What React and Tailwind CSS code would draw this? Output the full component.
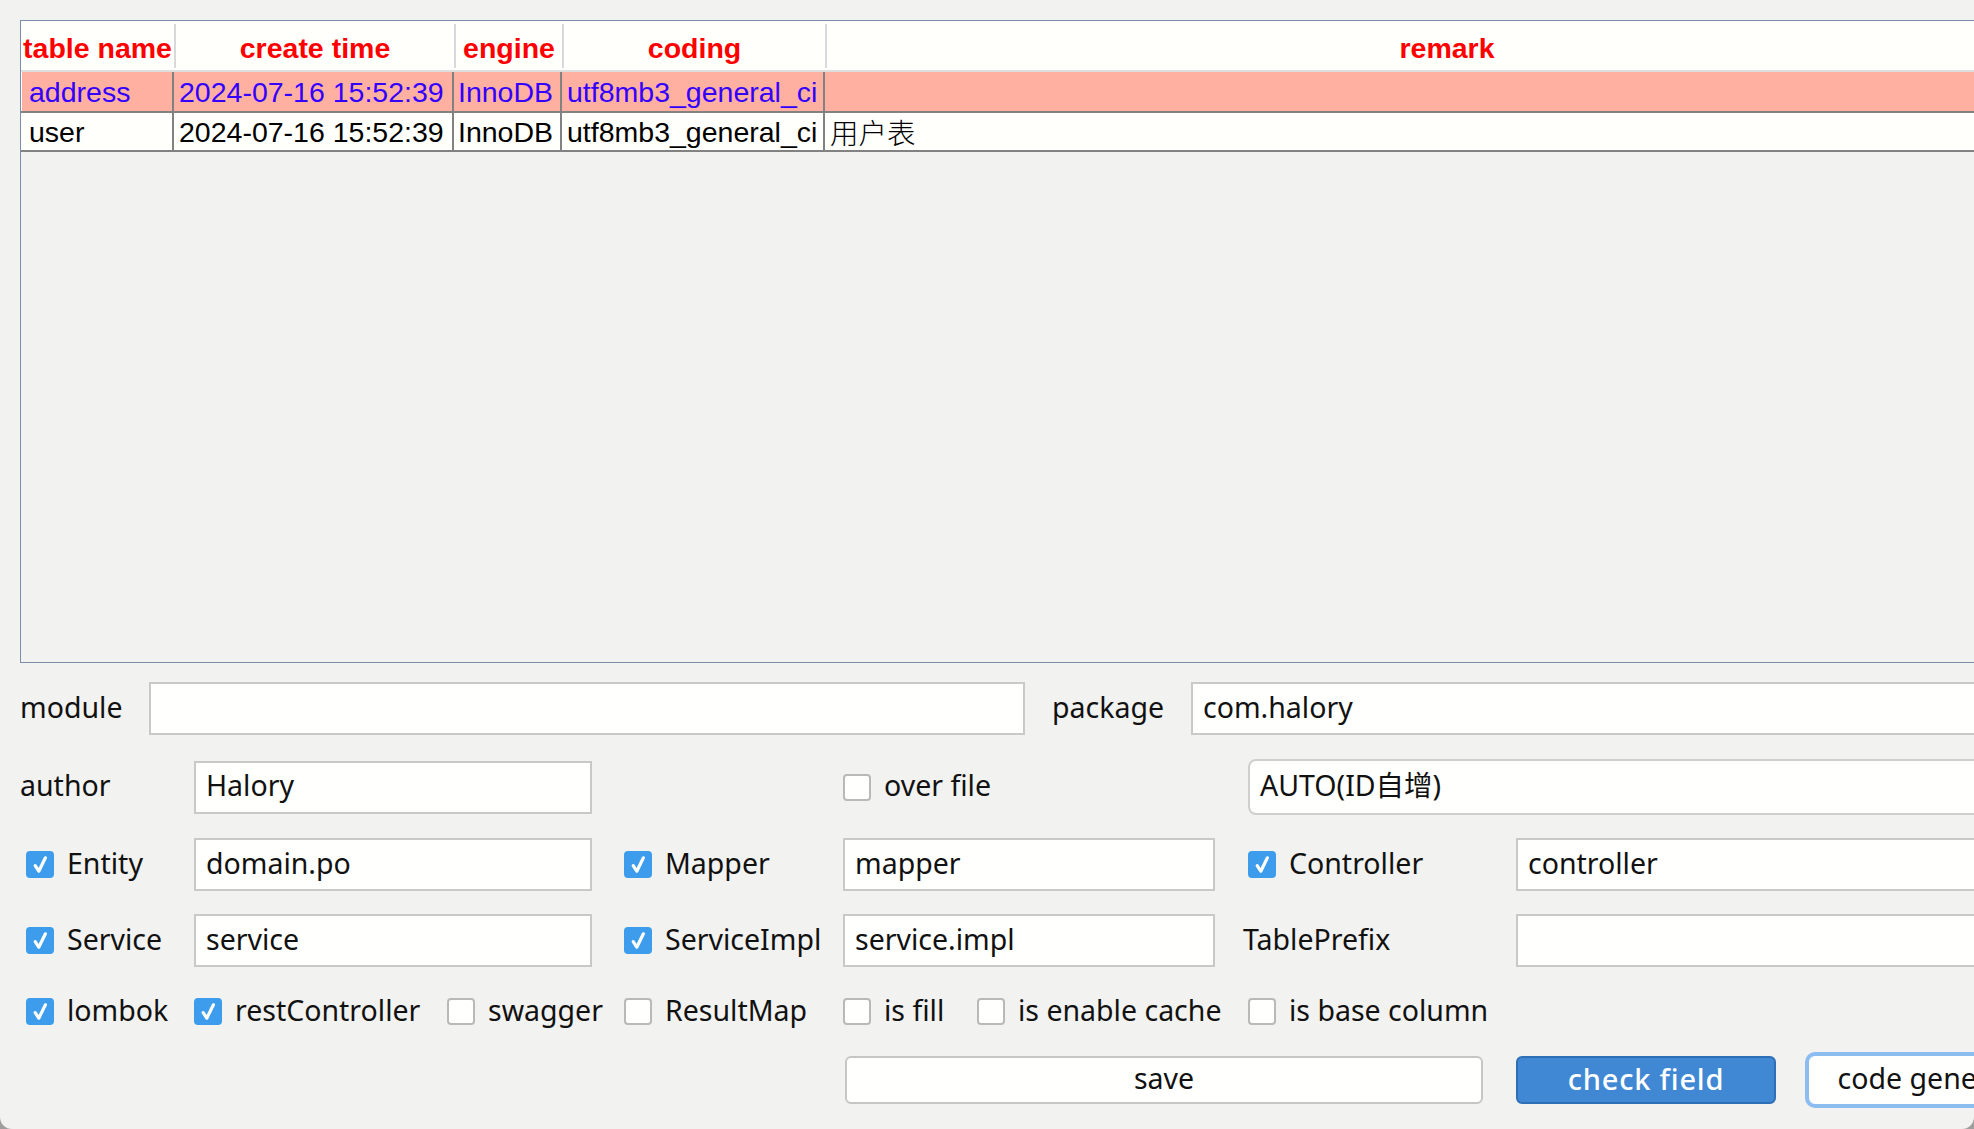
import React from "react";

function Box({ checked }) {
  if (checked) {
    return (
      <span className="flex h-[27px] w-[28px] shrink-0 items-center justify-center rounded-[4px] bg-[#3d9cec]">
        <svg width="28" height="27" viewBox="0 0 28 27">
          <path d="M9.2 14.6 L12.8 20.2 L19.4 6.8" fill="none" stroke="#ffffff" strokeWidth="3.2" strokeLinecap="round" strokeLinejoin="round" />
        </svg>
      </span>
    );
  }
  return <span className="block h-[27px] w-[28px] shrink-0 rounded-[4px] border-2 border-[#b9b9b9] bg-[#fffffd]" />;
}

function Field({ value, className }) {
  return (
    <div className={"flex h-[53px] shrink-0 items-center border-2 border-[#c9c9c9] bg-[#fffffd] pb-[3px] pl-[10px] " + className}>
      {value}
    </div>
  );
}

function CheckLabel({ checked, label, className, boxClass }) {
  return (
    <div className={"flex shrink-0 items-center " + className}>
      <span className={boxClass}>
        <Box checked={checked} />
      </span>
      <span className="ml-[13px] whitespace-nowrap pb-[3px]">{label}</span>
    </div>
  );
}

const rows = [
  {
    sel: true,
    cells: ["address", "2024-07-16 15:52:39", "InnoDB", "utf8mb3_general_ci", ""],
  },
  {
    sel: false,
    cells: ["user", "2024-07-16 15:52:39", "InnoDB", "utf8mb3_general_ci", "用户表"],
  },
];

function Table() {
  return (
    <div className="ml-[20px] mt-[20px] flex h-[643px] w-[2120px] shrink-0 flex-col border border-[#7b8da8] bg-[#f2f2f0] font-['Liberation_Sans','Noto_Sans_CJK_SC',sans-serif] text-[28.5px]">
      <div className="flex h-[49px] shrink-0 items-center bg-[#fffffc] font-bold text-[#ff0000]">
        <div className="w-[153px] pt-[5px] text-center">table name</div>
        <div className="h-[44px] w-[2px] bg-[#d9d9d9]" />
        <div className="w-[278px] pt-[5px] text-center">create time</div>
        <div className="h-[44px] w-[2px] bg-[#d9d9d9]" />
        <div className="w-[106px] pt-[5px] text-center">engine</div>
        <div className="h-[44px] w-[2px] bg-[#d9d9d9]" />
        <div className="w-[261px] pt-[5px] text-center">coding</div>
        <div className="h-[44px] w-[2px] bg-[#d9d9d9]" />
        <div className="w-[1240px] pt-[5px] text-center">remark</div>
      </div>
      <div className="h-[2px] shrink-0 bg-[#dedede]" />
      {rows.map((r, i) => (
        <div
          key={i}
          className={
            "flex shrink-0 border-b-2 border-[#828282] " +
            (r.sel ? "h-[41px] bg-[#ffb0a0] text-[#3300ff]" : "h-[39px] bg-[#fffffc] text-[#000000]")
          }
        >
          <div className="w-[1px] bg-[#fffffc]" />
          <div className="flex w-[150px] items-center pl-[7px] pt-[2px]">{r.cells[0]}</div>
          <div className="w-[2px] bg-[#828282]" />
          <div className="flex w-[278px] items-center pl-[5px] pt-[2px]">{r.cells[1]}</div>
          <div className="w-[2px] bg-[#828282]" />
          <div className="flex w-[106px] items-center pl-[4px] pt-[2px]">{r.cells[2]}</div>
          <div className="w-[2px] bg-[#828282]" />
          <div className="flex w-[261px] items-center pl-[5px] pt-[2px]">{r.cells[3]}</div>
          <div className="w-[2px] bg-[#828282]" />
          <div className="flex w-[1240px] items-center pl-[5px] pt-[2px] font-['Noto_Sans_CJK_SC',sans-serif] font-light">{r.cells[4]}</div>
        </div>
      ))}
    </div>
  );
}

export default function App() {
  return (
    <div className="h-[1129px] w-[1974px] bg-[#9e9e9e]">
      <div className="flex h-[1129px] w-[1974px] flex-col overflow-hidden rounded-b-[12px] bg-[#f2f2f0]">
        <Table />
        <div className="flex flex-col pl-[20px] font-['Noto_Sans',sans-serif] text-[28.5px] text-[#111111]">
          {/* module / package */}
          <div className="mt-[19px] flex h-[53px] items-center">
            <span className="w-[129px] shrink-0 pb-[3px]">module</span>
            <Field value="" className="w-[876px]" />
            <span className="ml-[27px] w-[139px] shrink-0 pb-[3px]">package</span>
            <Field value="com.halory" className="w-[900px]" />
          </div>
          {/* author */}
          <div className="mt-[24px] flex h-[56px] items-center">
            <span className="w-[174px] shrink-0 pb-[3px]">author</span>
            <Field value="Halory" className="w-[398px]" />
            <CheckLabel checked={false} label="over file" className="w-[656px]" boxClass="ml-[251px]" />
            <div className="flex h-[56px] w-[800px] shrink-0 items-center rounded-[8px] border-2 border-[#cfcfcf] bg-[#fffffd] pb-[3px] pl-[10px] font-['Noto_Sans','Noto_Sans_CJK_SC',sans-serif]">
              AUTO(ID自增)
            </div>
          </div>
          {/* Entity */}
          <div className="mt-[23px] flex h-[53px] items-center">
            <CheckLabel checked label="Entity" className="w-[174px]" boxClass="ml-[6px]" />
            <Field value="domain.po" className="w-[398px]" />
            <CheckLabel checked label="Mapper" className="w-[251px]" boxClass="ml-[32px]" />
            <Field value="mapper" className="w-[372px]" />
            <CheckLabel checked label="Controller" className="w-[301px]" boxClass="ml-[33px]" />
            <Field value="controller" className="w-[600px]" />
          </div>
          {/* Service */}
          <div className="mt-[23px] flex h-[53px] items-center">
            <CheckLabel checked label="Service" className="w-[174px]" boxClass="ml-[6px]" />
            <Field value="service" className="w-[398px]" />
            <CheckLabel checked label="ServiceImpl" className="w-[251px]" boxClass="ml-[32px]" />
            <Field value="service.impl" className="w-[372px]" />
            <span className="w-[301px] shrink-0 pb-[3px] pl-[28px]">TablePrefix</span>
            <Field value="" className="w-[600px]" />
          </div>
          {/* options */}
          <div className="mt-[31px] flex h-[27px] items-center">
            <CheckLabel checked label="lombok" className="w-[174px]" boxClass="ml-[6px]" />
            <CheckLabel checked label="restController" className="w-[253px]" boxClass="" />
            <CheckLabel checked={false} label="swagger" className="w-[177px]" boxClass="" />
            <CheckLabel checked={false} label="ResultMap" className="w-[219px]" boxClass="" />
            <CheckLabel checked={false} label="is fill" className="w-[134px]" boxClass="" />
            <CheckLabel checked={false} label="is enable cache" className="w-[271px]" boxClass="" />
            <CheckLabel checked={false} label="is base column" className="w-[400px]" boxClass="" />
          </div>
          {/* buttons */}
          <div className="mt-[31px] flex h-[48px] items-center">
            <button className="ml-[825px] flex h-[48px] w-[638px] shrink-0 items-center justify-center rounded-[6px] border-2 border-[#c6c6c6] bg-[#fffffd] pb-[3px] text-[#111111]">
              save
            </button>
            <button className="ml-[33px] flex h-[48px] w-[260px] shrink-0 items-center justify-center rounded-[6px] border-2 border-[#2f6fb6] bg-[#4088d4] pb-[3px] text-[29px] font-medium tracking-[0.8px] text-[#ffffff]">
              check field
            </button>
            <button className="ml-[33px] flex h-[48px] w-[250px] shrink-0 items-center justify-center whitespace-nowrap rounded-[6px] border-2 border-[#ffffff] bg-[#fffffd] pb-[3px] text-[#111111] ring-4 ring-[#8dbdf0]">
              code generate
            </button>
          </div>
        </div>
      </div>
    </div>
  );
}
